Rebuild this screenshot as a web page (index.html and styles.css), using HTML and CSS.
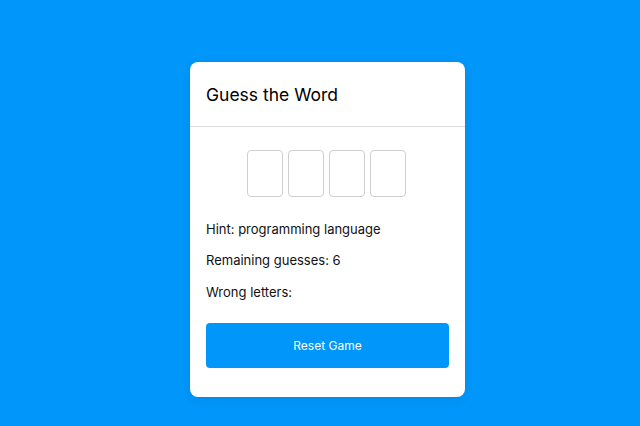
FILE: index.html
```html
<!DOCTYPE html>
<html>
<head>
<meta charset="utf-8">
<link rel="stylesheet" href="styles.css">
</head>
<body>
<div class="stage">
  <div class="card">
    <div class="card-header">
      <h1 class="title">Guess the Word</h1>
    </div>
    <div class="card-body">
      <div class="slots">
        <div class="slot"></div>
        <div class="slot"></div>
        <div class="slot"></div>
        <div class="slot"></div>
      </div>
      <p class="info info-first">Hint: programming language</p>
      <p class="info">Remaining guesses: 6</p>
      <p class="info">Wrong letters: </p>
      <button class="reset">Reset Game</button>
    </div>
  </div>
</div>
</body>
</html>
```

FILE: styles.css
```css
* { box-sizing: border-box; }
html, body {
  margin: 0;
  padding: 0;
  height: 100%;
}
body {
  background: #0096fa;
  font-family: "Inter", "Open Sans", sans-serif;
}
.stage {
  height: 426px;
  display: flex;
  align-items: center;
  justify-content: center;
  padding-left: 15px;
  padding-top: 32px;
}
.card {
  width: 275px;
  background: #fff;
  border-radius: 8px;
  box-shadow: 0 2px 10px rgba(0, 0, 0, 0.08);
}
.card-header {
  height: 65px;
  display: flex;
  align-items: center;
  padding: 0 16px 1px;
  border-bottom: 1px solid #dcdcdc;
}
.title {
  margin: 0;
  font-size: 17.5px;
  font-weight: 400;
  color: #000;
  padding-top: 2px;
}
.card-body {
  padding: 23px 16px 29px;
  display: flex;
  flex-direction: column;
}
.slots {
  display: flex;
  justify-content: center;
  gap: 5px;
  padding-right: 2px;
}
.slot {
  width: 36px;
  height: 47px;
  border: 1px solid #cfcfcf;
  border-radius: 4px;
}
.info {
  margin: 10.5px 0 0;
  font-size: 13px;
  line-height: 21px;
  color: #111;
}
.info-first { margin-top: 22px; }
.reset {
  margin-top: 20px;
  height: 45px;
  border: none;
  border-radius: 4px;
  background: #0096fa;
  color: #fff;
  font-family: inherit;
  font-size: 12px;
}
```
